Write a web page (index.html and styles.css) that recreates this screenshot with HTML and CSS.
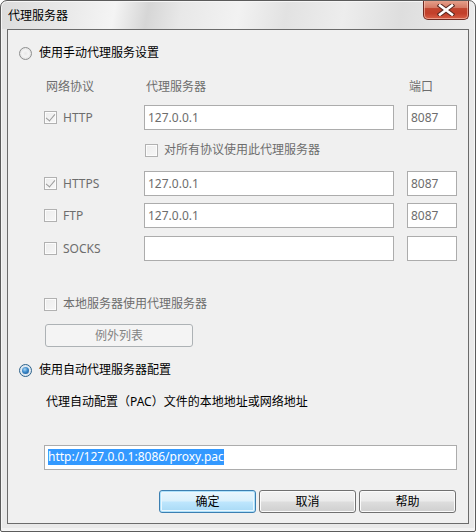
FILE: index.html
```html
<!DOCTYPE html>
<html lang="zh-CN">
<head>
<meta charset="utf-8">
<title>代理服务器</title>
<link rel="stylesheet" href="styles.css">
</head>
<body>
<div class="window">
  <div class="titlebar">
    <span class="title">代理服务器</span>
    <button class="close" aria-label="关闭">
      <svg width="18" height="12" viewBox="0 0 18 12">
        <path d="M3 1.5 L15 10.5 M15 1.5 L3 10.5" stroke="#5a2a22" stroke-width="4.6" stroke-linecap="square" fill="none"/>
        <path d="M3 1.5 L15 10.5 M15 1.5 L3 10.5" stroke="#ffffff" stroke-width="2.6" stroke-linecap="square" fill="none"/>
      </svg>
    </button>
  </div>
  <div class="client">
    <label class="radio-row first">
      <span class="radio"></span>
      <span>使用手动代理服务设置</span>
    </label>

    <div class="grid head">
      <span class="dis h-proto">网络协议</span>
      <span class="dis h-srv">代理服务器</span>
      <span class="dis h-port">端口</span>
    </div>

    <div class="grid row r-http">
      <span class="proto"><span class="check checked"></span><span class="dis">HTTP</span></span>
      <span class="field">127.0.0.1</span>
      <span class="field port">8087</span>
    </div>

    <div class="grid all-row">
      <span></span>
      <span class="proto"><span class="check"></span><span class="dis">对所有协议使用此代理服务器</span></span>
    </div>

    <div class="grid row r-https">
      <span class="proto"><span class="check checked"></span><span class="dis">HTTPS</span></span>
      <span class="field">127.0.0.1</span>
      <span class="field port">8087</span>
    </div>

    <div class="grid row r-ftp">
      <span class="proto"><span class="check"></span><span class="dis">FTP</span></span>
      <span class="field">127.0.0.1</span>
      <span class="field port">8087</span>
    </div>

    <div class="grid row r-socks">
      <span class="proto"><span class="check"></span><span class="dis">SOCKS</span></span>
      <span class="field"></span>
      <span class="field port"></span>
    </div>

    <div class="local-row proto">
      <span class="check"></span><span class="dis">本地服务器使用代理服务器</span>
    </div>

    <div class="except-wrap">
      <button class="btn disabled">例外列表</button>
    </div>

    <label class="radio-row auto">
      <span class="radio on"></span>
      <span>使用自动代理服务器配置</span>
    </label>

    <div class="pac-label">代理自动配置（PAC）文件的本地地址或网络地址</div>

    <div class="url-field"><span class="sel">http://127.0.0.1:8086/proxy.pac</span></div>

    <div class="buttons">
      <button class="btn default">确定</button>
      <button class="btn">取消</button>
      <button class="btn">帮助</button>
    </div>
  </div>
</div>
</body>
</html>
```
FILE: styles.css
```css
* { box-sizing: border-box; }
html, body { margin: 0; padding: 0; background: #ffffff; }
body {
  font-family: "Noto Sans", "Noto Sans CJK SC", sans-serif;
  font-size: 12px;
  line-height: 16px;
  color: #000;
}

.window {
  width: 476px;
  height: 532px;
  border: 1px solid #5b5b5b;
  border-radius: 7px 7px 2px 2px;
  padding: 0 6px 7px 6px;
  background:
    linear-gradient(100deg, #dcdcdc 0%, #e9e9e9 14%, #f4f4f4 24%, #d6d6d6 31%, #e8e8e8 38%, #f2f2f2 50%, #e2e2e2 60%, #ededed 72%, #dedede 84%, #ececec 100%) top / 100% 28px no-repeat,
    #e9e9e9;
  box-shadow: inset 0 0 0 1px #f6f6f6, inset 0 -2px 0 1px #f3f3f3;
  display: flex;
  flex-direction: column;
  overflow: hidden;
}

.titlebar {
  height: 28px;
  flex: none;
  display: flex;
  align-items: flex-start;
  justify-content: space-between;
}
.title {
  padding: 7px 0 0 1px;
  font-size: 12px;
  line-height: 16px;
  color: #000;
}
.close {
  width: 46px;
  height: 20px;
  margin: -1px 0 0 0;
  padding: 0;
  border: 1px solid #6e2a22;
  border-top: none;
  border-radius: 0 0 5px 5px;
  background: linear-gradient(#e7a590 0%, #d57a65 40%, #c2452f 45%, #c23f2a 70%, #d85f47 100%);
  box-shadow: inset 0 0 0 1px rgba(255, 210, 195, 0.55);
  display: flex;
  align-items: center;
  justify-content: center;
}
.close svg { display: block; margin-top: 1px; }

.client {
  flex: 1;
  border: 1px solid #6b6b6b;
  background: #f0f0f0;
  padding: 0 12px 0 11px;
}

.dis { color: #6d6d6d; }

.radio-row {
  display: flex;
  align-items: center;
  height: 16px;
  gap: 7px;
}
.radio-row.first { margin-top: 15px; }
.radio-row.auto { margin-top: 15px; }
.radio {
  width: 13px;
  height: 13px;
  border-radius: 50%;
  border: 1px solid #8e8f8f;
  background: radial-gradient(circle at 50% 50%, #e8e8e8 0%, #f4f4f4 40%, #d5d5d5 100%);
  flex: none;
  position: relative;
}
.radio.on {
  border-color: #2c628b;
  background: radial-gradient(circle at 50% 50%, #e8eff5 0%, #d8e4ee 100%);
}
.radio.on::after {
  content: "";
  position: absolute;
  left: 2px; top: 2px;
  width: 7px; height: 7px;
  border-radius: 50%;
  background: radial-gradient(circle at 40% 35%, #a6d4f6 0%, #3a89c9 45%, #1b4f8a 100%);
}

.grid {
  display: grid;
  grid-template-columns: 87px 250px 50px;
  column-gap: 13px;
  margin-left: 25px;
  align-items: center;
}
.head { margin-top: 18px; height: 16px; }
.h-proto, .h-srv, .h-port { padding-left: 2px; }

.row { height: 25px; }
.r-http { margin-top: 10px; }
.r-https { margin-top: 13px; }
.r-ftp { margin-top: 7px; }
.r-socks { margin-top: 8px; }

.all-row { margin-top: 12px; height: 16px; }
.all-row .proto { padding-left: 1px; }

.proto {
  display: flex;
  align-items: center;
  gap: 6px;
  height: 16px;
}

.check {
  width: 13px;
  height: 13px;
  flex: none;
  border: 1px solid #b1b1b1;
  background: linear-gradient(135deg, #ececec 0%, #f7f7f7 100%);
  box-shadow: inset 0 0 0 1px #fcfcfc;
  position: relative;
}
.check.checked::after {
  content: "";
  position: absolute;
  left: 3px; top: 0px;
  width: 4px; height: 8px;
  border: solid #9a9a9a;
  border-width: 0 1.5px 1.5px 0;
  transform: rotate(40deg);
}

.field {
  height: 25px;
  border: 1px solid #acacac;
  background: #fff;
  color: #6d6d6d;
  padding: 3px 3px 0 3px;
  line-height: 17px;
  white-space: nowrap;
  overflow: hidden;
}

.local-row { margin: 35px 0 0 25px; }

.except-wrap { margin: 12px 0 0 26px; }
.btn {
  font-family: inherit;
  font-size: 12px;
  line-height: 16px;
  height: 23px;
  padding: 0;
  border: 1px solid #707070;
  border-radius: 3px;
  color: #000;
  background: linear-gradient(#f2f2f2 0%, #ebebeb 48%, #dddddd 52%, #cfcfcf 100%);
  box-shadow: inset 0 0 0 1px #fbfbfb;
}
.btn.disabled {
  width: 148px;
  border-color: #adb2b5;
  background: #f4f4f4;
  color: #838383;
  box-shadow: none;
}
.btn.default {
  border-color: #3c7fb1;
  background: linear-gradient(#eaf6fd 0%, #d9f0fc 48%, #bee6fd 52%, #a7d9f5 100%);
  box-shadow: inset 0 0 0 1px #aee1fb, inset 0 0 0 2px #eaf6fd;
}

.pac-label { margin: 16px 0 0 27px; height: 16px; }

.url-field {
  margin: 35px 0 0 25px;
  width: 413px;
  height: 25px;
  border: 1px solid #acacac;
  background: #fff;
  padding: 3px 0 0 3px;
  line-height: 16px;
  white-space: nowrap;
}
.sel {
  display: inline-block;
  background: #3399ff;
  color: #fff;
  height: 16px;
}

.buttons {
  margin-top: 20px;
  display: flex;
  justify-content: flex-end;
  gap: 3px;
}
.buttons .btn { width: 97px; }
```
